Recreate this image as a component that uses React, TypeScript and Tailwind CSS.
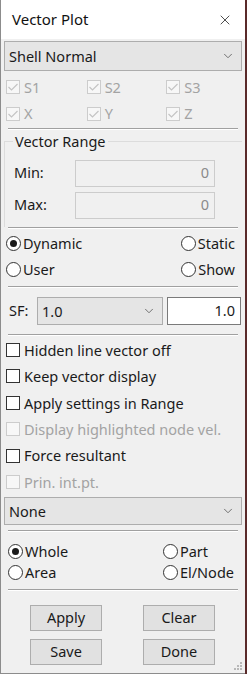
import { ChevronDown, X } from 'lucide-react'

const font = { fontFamily: '"Noto Sans", "Open Sans", sans-serif' }

function Check({ checked, disabled, label }: { checked?: boolean; disabled?: boolean; label: string }) {
  return (
    <div className="flex items-center gap-[4px] h-[26.4px]">
      <span
        className={`flex items-center justify-center w-[14px] h-[14px] border ${
          disabled ? 'border-[#cccccc] bg-[#f7f7f7]' : 'border-[#333333] bg-white'
        }`}
      >
        {checked && (
          <svg width="12" height="12" viewBox="0 0 12 12">
            <path d="M1.5 6 L4.5 9 L10.5 3" fill="none" stroke="#c4c4c4" strokeWidth="1.2" />
          </svg>
        )}
      </span>
      <span className={`text-[14.5px] leading-none ${disabled ? 'text-[#a3a3a3]' : 'text-[#1a1a1a]'}`}>{label}</span>
    </div>
  )
}

function Radio({ checked, label }: { checked?: boolean; label: string }) {
  return (
    <div className="flex items-center gap-[2px]">
      <span className="flex items-center justify-center w-[15px] h-[15px] rounded-full border border-[#333333] bg-white">
        {checked && <span className="w-[7px] h-[7px] rounded-full bg-[#1a1a1a]" />}
      </span>
      <span className="text-[14.5px] leading-none text-[#1a1a1a]">{label}</span>
    </div>
  )
}

function Select({ value, className }: { value: string; className?: string }) {
  return (
    <div
      className={`flex items-center justify-between border border-[#adadad] bg-[#e5e5e5] pl-[4px] pr-[6px] ${className ?? ''}`}
    >
      <span className="text-[14.5px] leading-none text-[#1a1a1a]">{value}</span>
      <ChevronDown size={14} strokeWidth={1.5} className="text-[#606060]" />
    </div>
  )
}

function Btn({ label }: { label: string }) {
  return (
    <div className="flex items-center justify-center w-[72px] h-[26px] border border-[#adadad] bg-[#e1e1e1] text-[14.5px] text-[#1a1a1a]">
      {label}
    </div>
  )
}

const Sep = ({ className }: { className?: string }) => (
  <div className={`mx-[4px] border-t border-[#a0a0a0] border-b-white border-b ${className ?? ''}`} />
)

export default function App() {
  return (
    <div className="w-[247px] h-[674px] bg-[#5a2a2a] flex" style={font}>
      <div className="w-[245px] h-[674px] flex flex-col bg-[#f0f0f0] border-l border-[#8c8c8c]">
        {/* Title */}
        <div className="h-[39px] bg-white flex items-center justify-between pl-[11px] pr-[12px] shrink-0">
          <span className="text-[15px] text-[#111111]">Vector Plot</span>
          <X size={16} strokeWidth={1.2} className="text-[#222222]" />
        </div>

        <div className="flex flex-col px-[3px]">
          <Select value="Shell Normal" className="mt-[2px] h-[30px]" />

          {/* Components */}
          <div className="grid grid-cols-3 pl-[2px] mt-[3px]">
            <Check checked disabled label="S1" />
            <div className="pl-[2px]"><Check checked disabled label="S2" /></div>
            <div className="pl-[3px]"><Check checked disabled label="S3" /></div>
            <Check checked disabled label="X" />
            <div className="pl-[2px]"><Check checked disabled label="Y" /></div>
            <div className="pl-[3px]"><Check checked disabled label="Z" /></div>
          </div>

          <Sep className="mt-[1px] mx-0" />

          {/* Vector Range */}
          <div className="relative mt-[11px] border border-[#dcdcdc] border-r-0 border-b-0 h-[86px]">
            <span className="absolute -top-[10px] left-[8px] px-[2px] bg-[#f0f0f0] text-[14.5px] leading-[18px] text-[#1a1a1a]">
              Vector Range
            </span>
            <div className="flex flex-col gap-[5px] pt-[18px] pl-[9px]">
              <div className="flex items-center">
                <span className="w-[61px] text-[14.5px] text-[#1a1a1a]">Min:</span>
                <div className="w-[140px] h-[27px] border border-[#cccccc] bg-[#f0f0f0] flex items-center justify-end pr-[5px] text-[14.5px] text-[#8a8a8a]">
                  0
                </div>
              </div>
              <div className="flex items-center">
                <span className="w-[61px] text-[14.5px] text-[#1a1a1a]">Max:</span>
                <div className="w-[140px] h-[27px] border border-[#cccccc] bg-[#f0f0f0] flex items-center justify-end pr-[5px] text-[14.5px] text-[#8a8a8a]">
                  0
                </div>
              </div>
            </div>
          </div>

          <Sep className="mx-0" />

          {/* Scale mode */}
          <div className="flex flex-col gap-[11px] pt-[7px] pl-[2px] pr-[7px]">
            <div className="flex justify-between">
              <Radio checked label="Dynamic" />
              <Radio label="Static" />
            </div>
            <div className="flex justify-between">
              <Radio label="User" />
              <Radio label="Show" />
            </div>
          </div>

          <Sep className="mt-[9px]" />

          {/* SF */}
          <div className="flex items-center mt-[9px] pl-[5px]">
            <span className="w-[28px] text-[14.5px] text-[#1a1a1a]">SF:</span>
            <Select value="1.0" className="w-[126px] h-[28px]" />
            <div className="ml-[4px] w-[74px] h-[28px] border border-[#7a7a7a] bg-white flex items-center justify-end pr-[5px] text-[14.5px] text-[#1a1a1a]">
              1.0
            </div>
          </div>

          <Sep className="mt-[9px]" />

          {/* Options */}
          <div className="flex flex-col pl-[2px] mt-[1px]">
            <Check label="Hidden line vector off" />
            <Check label="Keep vector display" />
            <Check label="Apply settings in Range" />
            <Check disabled label="Display highlighted node vel." />
            <Check label="Force resultant" />
            <Check disabled label="Prin. int.pt." />
          </div>

          <Select value="None" className="mt-[2px] h-[28px]" />

          <Sep className="mt-[5px] mx-0" />

          {/* Target */}
          <div className="grid grid-cols-[1fr_auto] gap-y-[6px] pt-[12px] pl-[4px] pr-[8px]">
            <Radio checked label="Whole" />
            <Radio label="Part" />
            <Radio label="Area" />
            <Radio label="El/Node" />
          </div>

          <Sep className="mt-[9px] mx-[2px]" />

          {/* Buttons */}
          <div className="grid grid-cols-2 gap-y-[8px] pt-[14px] pl-[26px] pr-[27px]">
            <Btn label="Apply" />
            <div className="justify-self-end"><Btn label="Clear" /></div>
            <Btn label="Save" />
            <div className="justify-self-end"><Btn label="Done" /></div>
          </div>
        </div>

        <div className="flex-1" />
        <div className="relative h-0">
          <svg className="absolute right-[3px] bottom-[3px]" width="8" height="8" viewBox="0 0 8 8">
            {[
              [6, 0], [6, 3], [3, 3], [6, 6], [3, 6], [0, 6],
            ].map(([x, y]) => (
              <rect key={`${x}-${y}`} x={x} y={y} width="2" height="2" fill="#b8b8b8" />
            ))}
          </svg>
        </div>
        <div className="h-[1px] bg-[#8c8c8c]" />
      </div>
    </div>
  )
}
